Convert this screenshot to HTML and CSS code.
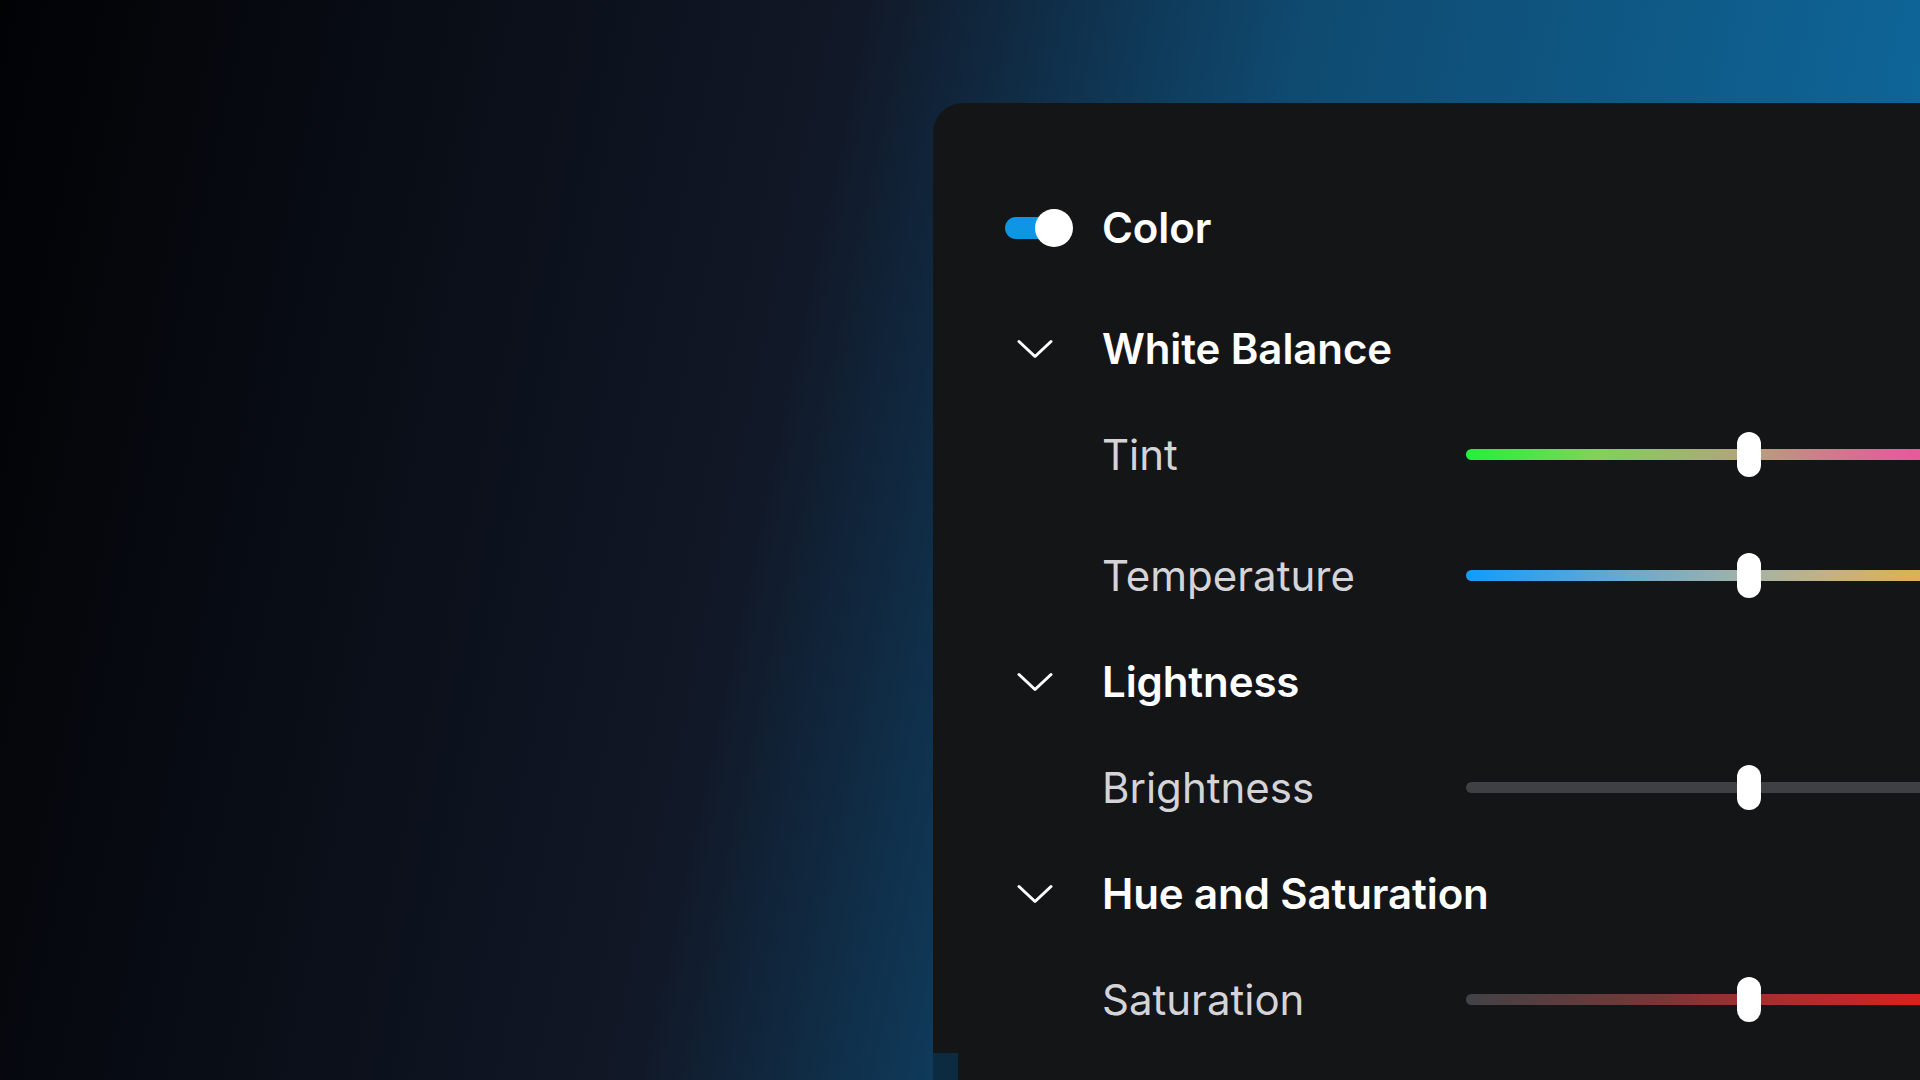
FILE: index.html
```html
<!DOCTYPE html>
<html lang="en">
<head>
<meta charset="utf-8">
<title>Color adjustments</title>
<link rel="stylesheet" href="styles.css">
</head>
<body>
<main class="stage">
  <section class="panel">
    <div class="row row-toggle">
      <span class="toggle is-on"><span class="toggle-track"></span><span class="toggle-knob"></span></span>
      <h2 class="title">Color</h2>
    </div>

    <div class="group">
      <div class="row row-head">
        <svg class="chevron" viewBox="0 0 36 20" width="36" height="20" aria-hidden="true"><polyline points="2,2.5 18,17.5 34,2.5" fill="none" stroke="#ffffff" stroke-width="3" stroke-linecap="round" stroke-linejoin="round"/></svg>
        <h3 class="title">White Balance</h3>
      </div>
      <div class="row row-slider">
        <span class="label">Tint</span>
        <div class="track track-tint"><span class="thumb"></span></div>
      </div>
      <div class="row row-slider">
        <span class="label">Temperature</span>
        <div class="track track-temp"><span class="thumb"></span></div>
      </div>
    </div>

    <div class="group">
      <div class="row row-head">
        <svg class="chevron" viewBox="0 0 36 20" width="36" height="20" aria-hidden="true"><polyline points="2,2.5 18,17.5 34,2.5" fill="none" stroke="#ffffff" stroke-width="3" stroke-linecap="round" stroke-linejoin="round"/></svg>
        <h3 class="title">Lightness</h3>
      </div>
      <div class="row row-slider">
        <span class="label">Brightness</span>
        <div class="track track-bright"><span class="thumb"></span></div>
      </div>
    </div>

    <div class="group">
      <div class="row row-head">
        <svg class="chevron" viewBox="0 0 36 20" width="36" height="20" aria-hidden="true"><polyline points="2,2.5 18,17.5 34,2.5" fill="none" stroke="#ffffff" stroke-width="3" stroke-linecap="round" stroke-linejoin="round"/></svg>
        <h3 class="title">Hue and Saturation</h3>
      </div>
      <div class="row row-slider">
        <span class="label">Saturation</span>
        <div class="track track-sat"><span class="thumb"></span></div>
      </div>
    </div>

    <span class="panel-notch"></span>
  </section>
</main>
</body>
</html>
```

FILE: styles.css
```css
* { box-sizing: border-box; }

html, body {
  margin: 0;
  padding: 0;
  width: 100%;
  height: 100%;
  overflow: hidden;
}

body {
  font-family: "Inter", "Noto Sans", "Liberation Sans", sans-serif;
  background: linear-gradient(102deg,
    #010204 0%,
    #080c14 18%,
    #111827 40%,
    #0f3a5a 54%,
    #0f4a70 61%,
    #0e6496 89%,
    #0a6aa0 100%);
}

.stage {
  width: 1920px;
  height: 1080px;
  padding: 103px 0 0 933px;
  display: flex;
  align-items: flex-start;
}

.panel {
  position: relative;
  flex: none;
  width: 1120px;
  min-height: 1000px;
  background: #141517;
  border-top-left-radius: 30px;
  padding: 50px 0 0 72px;
  display: flex;
  flex-direction: column;
}

.row {
  display: grid;
  grid-template-columns: 97px 364px 566px;
  align-items: center;
}

.row-toggle { height: 150px; }
.row-head { height: 91px; }
.row-slider { height: 121px; }

.title {
  grid-column: 2 / 4;
  margin: 0;
  font-size: 42px;
  font-weight: 600;
  color: #ffffff;
  letter-spacing: -0.1px;
  line-height: 1;
}

.label {
  grid-column: 2;
  font-size: 42px;
  font-weight: 400;
  color: #d4d4d8;
  line-height: 1;
}

.chevron {
  display: block;
  margin-left: 12px;
}

.toggle {
  position: relative;
  display: block;
  width: 68px;
  height: 38px;
}

.toggle-track {
  position: absolute;
  left: 0;
  top: 8px;
  width: 58px;
  height: 22px;
  border-radius: 11px;
  background: #0e96e4;
}

.toggle-knob {
  position: absolute;
  right: 0;
  top: 0;
  width: 38px;
  height: 38px;
  border-radius: 50%;
  background: #ffffff;
}

.track {
  position: relative;
  grid-column: 3;
  height: 11px;
  border-radius: 6px;
}

.track-tint {
  background: linear-gradient(to right,
    #1ff23a 0%,
    #7fd35a 22%,
    #b4a27c 50%,
    #cc8089 62%,
    #e0609a 76%,
    #ee4a9a 100%);
}

.track-temp {
  background: linear-gradient(to right,
    #119cfa 0%,
    #5aa6d8 22%,
    #a3b3a7 50%,
    #c4b182 64%,
    #dcb05a 78%,
    #e8b048 100%);
}

.track-bright { background: #3f4044; }

.track-sat {
  background: linear-gradient(to right,
    #414246 0%,
    #7a3636 35%,
    #a92e2e 55%,
    #d92020 80%,
    #e81818 100%);
}

.thumb {
  position: absolute;
  left: 50%;
  top: 50%;
  width: 24px;
  height: 45px;
  margin: -22.5px 0 0 -12px;
  border-radius: 12px;
  background: #ffffff;
}

.panel-notch {
  position: absolute;
  left: 0;
  top: 950px;
  width: 25px;
  height: 50px;
  background: #0c2b40;
}
```
